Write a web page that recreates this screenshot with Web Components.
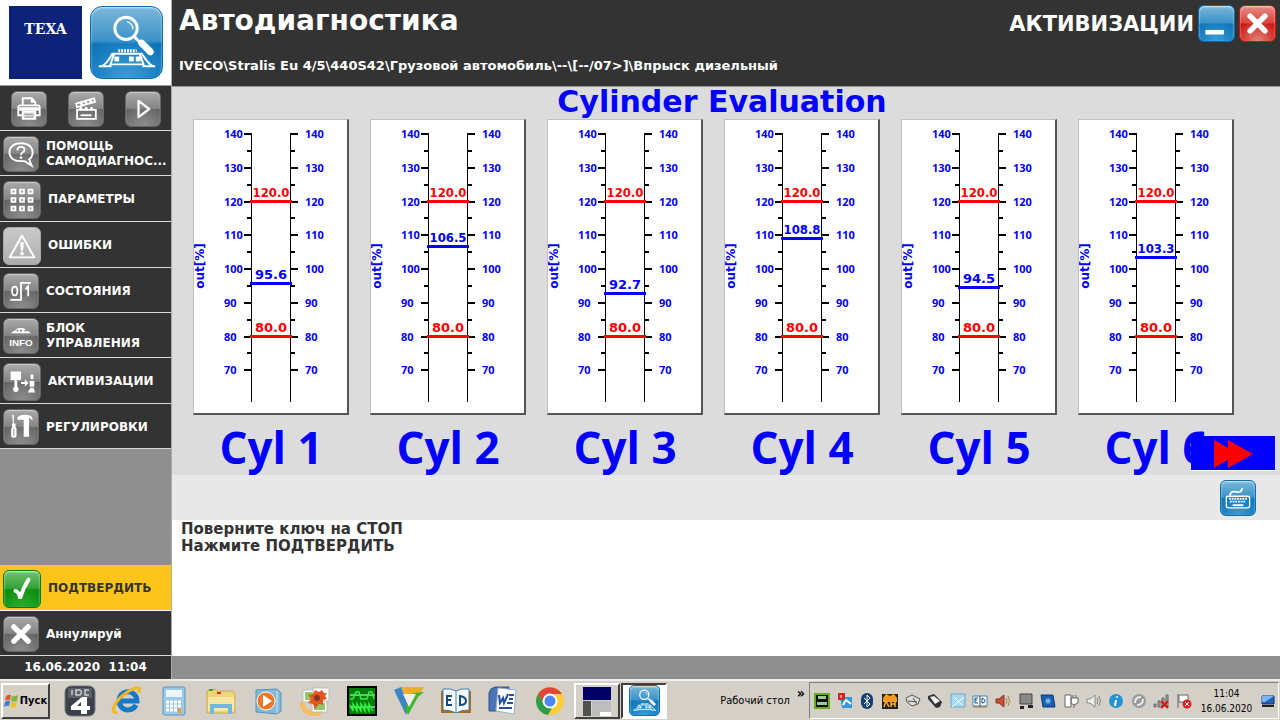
<!DOCTYPE html>
<html lang="ru">
<head>
<meta charset="utf-8">
<title>Автодиагностика</title>
<style>
  body {
    margin: 0;
    font-family: "DejaVu Sans", Verdana, sans-serif;
  }
</style>
</head>
<body>
<diag-app></diag-app>

<script>
const GLYPHS = {
  probe: `<g fill="none" stroke="#fff"><circle cx="36" cy="22" r="11.500" stroke-width="3"/><path d="M37 15a8 8 0 0 1 6 8" stroke-width="1.500"/><path d="M45 31l6 6" stroke-width="3"/><path d="M52 37l9 9" stroke-width="7" stroke-linecap="round"/><path d="M8 61h12v-2h34v2h12M11 61c6-3 8-8 11-13h30c4 5 6 10 12 13M20 59l4-11M54 59l-4-11" stroke-width="2"/><path d="M28 45h19" stroke-width="3" stroke-dasharray="2 1"/></g><path fill="#fff" d="M24 51h5v5h-5zM39 51h5v5h-5zM46 51h5v5h-5z"/>`,
  printer: `<g fill="none" stroke="#fff" stroke-width="2"><path d="M12 15V7h10l4 4v4M22 7v4h4M12 26H7V17q0-2 2-2h20q2 0 2 2v9h-5"/><path d="M12 22h14v8H12z" fill="#ddd"/></g><path stroke="#888" d="M14 25h10M14 28h10"/><path fill="#fff" d="M8 17h22v4H8z"/>`,
  clapper: `<g fill="none" stroke="#fff" stroke-width="2"><path d="M9 20h21v10H9zM8 13l20-6 1 4-20 6z"/><path d="M13 26h12"/><path d="M13 11l2 4M18 10l2 4M23 8l2 4M14 17l-2 3M20 17l-2 3M26 17l-2 3" stroke-width="3"/></g>`,
  play: `<path d="M14 10l12 9-12 9z" fill="none" stroke="#fff" stroke-width="2.500" stroke-linejoin="round"/>`,
  help: `<path d="M19 7C11 7 6 11 6 17s5 10 12 10h5l8 5-3-7c3-2 4-5 4-8 0-6-5-10-13-10z" fill="none" stroke="#fff" stroke-width="2"/><path d="M15 15q0-4 4-4t4 3q0 2-2 3t-2 3" fill="none" stroke="#fff" stroke-width="2"/><circle cx="19" cy="23" r="1.500" fill="#fff"/>`,
  grid: `<g fill="#999" stroke="#fff" stroke-width="2"><path d="M8 8h4v4H8zM17 8h4v4h-4zM26 8h4v4h-4zM8 17h4v4H8zM17 17h4v4h-4zM26 17h4v4h-4zM8 26h4v4H8zM17 26h4v4h-4zM26 26h4v4h-4z"/></g>`,
  warn: `<path d="M19 8l13 23H6z" fill="none" stroke="#fff" stroke-width="2" stroke-linejoin="round"/><path d="M17 15h4l-1 9h-2z" fill="#fff"/><circle cx="19" cy="27" r="2" fill="#fff"/>`,
  states: `<ellipse cx="12" cy="19" rx="3" ry="5" fill="none" stroke="#fff" stroke-width="2"/><path d="M7 29h12V10h11M24 17l3-3v11" fill="none" stroke="#fff" stroke-width="2"/>`,
  info: `<path d="M8 16h22q-1-2-5-3-2-3-4-3h-4q-3 0-5 3-3 1-4 3z" fill="#fff"/><path d="M14 13h2M18 13h2M23 13h2" stroke="#888" stroke-width="2"/><text x="19" y="30" text-anchor="middle" font-size="11" font-weight="bold" font-family="Liberation Sans, sans-serif" fill="#fff">INFO</text>`,
  activate: `<path fill="#fff" d="M7 8h11v9h-4v7a3 3 0 1 1-3 0v-7H7zM18 19h4v-3l4 4-4 4v-3h-4zM28 11h3v5h-3zM27 18h5v6h-5zM28 25h3l2 5h-8z"/>`,
  tools: `<path fill="#fff" d="M9 5l2 1v9h2v5h1v9q0 2-3 2t-3-2v-9h1v-5h1zM15 8q5-4 13-2 4 1 4 6l-3-3h-1v21h-6V11h-7z"/><path stroke="#888" d="M11 21v8"/>`,
  check: `<path d="M12 21q4 1 5 8 3-11 9-20" fill="none" stroke="#fff" stroke-width="4" stroke-linecap="round"/>`,
  cross: `<path d="M11 11l16 16M27 11L11 27" stroke="#fff" stroke-width="6" stroke-linecap="round"/>`,
  minimize: `<path fill="#fff" d="M7 26h20v5H7z"/>`,
  keyboard: `<g fill="none" stroke="#fff"><rect x="6" y="17" width="26" height="13" rx="2" stroke-width="1.500"/><path d="M10 16q1-5 5-4t7 0l2-4" stroke-width="2"/><path d="M9 20h20M10 23h18" stroke-width="2" stroke-dasharray="2 1"/><path d="M13 27h12" stroke-width="2"/></g>`
};

const SIZES = { probe: 73 };

/* Glossy rounded square that carries most of the pictograms. */
class IconTile extends HTMLElement {
  constructor() {
    super();
    this.attachShadow({ mode: 'open' });
  }

  connectedCallback() {
    const name = this.getAttribute('name');
    const box = SIZES[name] || 38;
    this.shadowRoot.innerHTML = `
      <style>
        :host {
          display: block;
          flex: none;
          box-sizing: border-box;
          width: var(--tile, 36px);
          height: var(--tile, 36px);
          border-radius: var(--tile-radius, 6px);
          border: 1px solid #666;
          background: radial-gradient(circle at 50% 100%, #8d8d8d, transparent 60%), linear-gradient(#a9a9a9, #858585 48%, #626262 52%, #6c6c6c);
          box-shadow: inset 0 1px 1px #ccc;
        }
        :host([tone="blue"]) {
          border-color: #0b6dac;
          background: radial-gradient(circle at 50% 100%, #3c9bd8, transparent 60%), linear-gradient(#7ab7da, #3a92c7 48%, #0b72b5 52%, #0b76b9);
          box-shadow: inset 0 1px 2px #d5ecf8;
        }
        :host([tone="red"]) {
          border-color: #c4160f;
          background: radial-gradient(circle at 50% 100%, #e08078, transparent 60%), linear-gradient(#e78d88, #d9433c 48%, #cb110b 52%, #cf1c14);
          box-shadow: inset 0 1px 2px #f7cfcc;
        }
        :host([tone="green"]) {
          border-color: #0b7a10;
          background: radial-gradient(circle at 50% 100%, #2cab2e, transparent 60%), linear-gradient(#6fc26e, #34a136 48%, #078a0c 52%, #0a930f);
          box-shadow: inset 0 1px 2px #d0f0d0;
        }
        :host([tone="pale"]) {
          border-color: #aaa;
          background: linear-gradient(#c8c8c8, #bcbcbc 50%, #acacac);
        }
        svg { display: block; width: 100%; height: 100%; }
      </style>
      <svg viewBox="0 0 ${box} ${box}" aria-hidden="true">${GLYPHS[name]}</svg>
    `;
  }
}
customElements.define('icon-tile', IconTile);

class SideButton extends HTMLElement {
  constructor() {
    super();
    this.attachShadow({ mode: 'open' });
  }

  connectedCallback() {
    this.shadowRoot.innerHTML = `
      <style>
        :host { display: block; }
        button {
          display: flex;
          align-items: center;
          gap: 7px;
          box-sizing: border-box;
          width: 100%;
          height: 45px;
          padding: 2px 0 0 3px;
          border: 0;
          border-bottom: 1px solid #d8d8d8;
          background: #333;
          color: #fff;
          font: bold 12px/15px "DejaVu Sans", Verdana, sans-serif;
          text-align: left;
          white-space: nowrap;
        }
        :host([large]) button { height: 46px; --tile: 38px; }
        :host([primary]) button {
          background: #fdc51b;
          color: #333;
          border-bottom: 1px solid #fff;
        }
      </style>
      <button type="button">
        <icon-tile name="${this.getAttribute('icon')}" tone="${this.getAttribute('tone') || 'grey'}"></icon-tile>
        <span><slot></slot></span>
      </button>
    `;
  }
}
customElements.define('side-button', SideButton);

class SideBar extends HTMLElement {
  constructor() {
    super();
    this.attachShadow({ mode: 'open' });
    this.shadowRoot.innerHTML = `
      <style>
        :host {
          display: flex;
          flex-direction: column;
          box-sizing: border-box;
          width: 172px;
          flex: none;
          border-right: 1px solid #aaa;
          background: #8f8f8f;
        }
        .logos {
          display: flex;
          justify-content: space-between;
          box-sizing: border-box;
          height: 86px;
          padding: 6px 8px 0 9px;
          background: #fff;
          border-bottom: 1px solid #999;
          --tile: 73px;
          --tile-radius: 12px;
        }
        .brand {
          width: 73px;
          height: 73px;
          background: #0d2379;
          color: #fff;
          font: bold 14px/46px "DejaVu Serif", serif;
          text-align: center;
        }
        .tools {
          display: flex;
          justify-content: space-between;
          align-items: center;
          box-sizing: border-box;
          height: 45px;
          padding: 2px 10px 0 11px;
          background: #333;
          border-bottom: 1px solid #d8d8d8;
        }
        .tools button { padding: 0; border: 0; background: none; }
        .space { flex: 1; }
        time {
          background: #333;
          color: #fff;
          font: bold 12px/23px "DejaVu Sans", Verdana, sans-serif;
          text-align: center;
          white-space: pre;
        }
      </style>
      <div class="logos">
        <div class="brand">TEXA</div>
        <icon-tile name="probe" tone="blue"></icon-tile>
      </div>
      <div class="tools">
        <button type="button" aria-label="Печать"><icon-tile name="printer"></icon-tile></button>
        <button type="button" aria-label="Запись"><icon-tile name="clapper"></icon-tile></button>
        <button type="button" aria-label="Пуск"><icon-tile name="play"></icon-tile></button>
      </div>
      <side-button icon="help">ПОМОЩЬ<br>САМОДИАГНОС...</side-button>
      <side-button icon="grid" large>ПАРАМЕТРЫ</side-button>
      <side-button icon="warn" tone="pale" large>ОШИБКИ</side-button>
      <side-button icon="states">СОСТОЯНИЯ</side-button>
      <side-button icon="info">БЛОК<br>УПРАВЛЕНИЯ</side-button>
      <side-button icon="activate" large>АКТИВИЗАЦИИ</side-button>
      <side-button icon="tools">РЕГУЛИРОВКИ</side-button>
      <div class="space"></div>
      <side-button icon="check" tone="green" large primary>ПОДТВЕРДИТЬ</side-button>
      <side-button icon="cross">Аннулируй</side-button>
      <time datetime="2020-06-16T11:04">16.06.2020  11:04</time>
    `;
  }
}
customElements.define('side-bar', SideBar);

class PageHeader extends HTMLElement {
  constructor() {
    super();
    this.attachShadow({ mode: 'open' });
    this.shadowRoot.innerHTML = `
      <style>
        :host {
          display: flex;
          justify-content: space-between;
          align-items: flex-start;
          box-sizing: border-box;
          height: 87px;
          padding: 5px 4px 0 7px;
          background: #333;
          border-bottom: 1px solid #999;
          color: #fff;
          font-weight: bold;
        }
        h1 { margin: 0; font-size: 28px; line-height: 32px; }
        p { margin: 20px 0 0; font-size: 13px; line-height: 18px; }
        .right { display: flex; align-items: center; gap: 4px; }
        h2 { margin: 0; font-size: 21px; line-height: 36px; }
        button { padding: 0; border: 0; background: none; --tile: 37px; }
      </style>
      <div>
        <h1>Автодиагностика</h1>
        <p>IVECO\\Stralis Eu 4/5\\440S42\\Грузовой автомобиль\\--\\[--/07&gt;]\\Впрыск дизельный</p>
      </div>
      <div class="right">
        <h2>АКТИВИЗАЦИИ</h2>
        <button type="button" aria-label="Свернуть"><icon-tile name="minimize" tone="blue"></icon-tile></button>
        <button type="button" aria-label="Закрыть"><icon-tile name="cross" tone="red"></icon-tile></button>
      </div>
    `;
  }
}
customElements.define('page-header', PageHeader);

class CylinderGauge extends HTMLElement {
  constructor() {
    super();
    this.attachShadow({ mode: 'open' });
  }

  // value in percent to a row of the drawing
  y(value) {
    return Math.round(13 + (140 - value) * 3.375);
  }

  scale() {
    let out = '';
    for (let v = 140; v >= 70; v -= 5) {
      const y = this.y(v);
      if (v % 10) {
        out += `<path d="M53 ${y}h4v2h-4zM97 ${y}h4v2h-4z"/>`;
      } else {
        out += `<path d="M50 ${y}h7v2h-7zM97 ${y}h7v2h-7z"/>
          <text class="num" x="30" y="${y + 5}">${v}</text>
          <text class="num" x="111" y="${y + 5}">${v}</text>`;
      }
    }
    return out;
  }

  mark(value, color) {
    const y = this.y(value);
    const text = value.toFixed(1);
    return `<rect x="56" y="${y - 1}" width="42" height="3" fill="${color}"/>
      <text class="mark ${text.length > 4 ? 'long' : ''}" x="77" y="${y - 4}" fill="${color}">${text}</text>`;
  }

  connectedCallback() {
    this.shadowRoot.innerHTML = `
      <style>
        :host { display: block; }
        figure { margin: 0; }
        svg {
          display: block;
          box-sizing: border-box;
          width: 100%;
          border: 1px solid #c4c1ba;
          border-right: 2px solid #555;
          border-bottom: 2px solid #555;
          background: #fff;
        }
        .num { font: bold 11px "Open Sans", sans-serif; fill: #00f; }
        .mark { font: bold 13px "DejaVu Sans", sans-serif; text-anchor: middle; }
        .long { font-family: "DejaVu Sans Condensed", "DejaVu Sans", sans-serif; }
        .unit { font: bold 12px "DejaVu Sans", sans-serif; fill: #00f; text-anchor: middle; }
        figcaption {
          color: #00f;
          font: bold 44px/64px "Open Sans", sans-serif;
          text-align: center;
          white-space: nowrap;
          height: 60px;
        }
      </style>
      <figure>
        <svg viewBox="0 0 153 293">
          <path d="M57 13h1v269h-1zM96 13h1v269h-1z"/>
          ${this.scale()}
          <text class="unit" transform="translate(10 146) rotate(-90)">out[%]</text>
          ${this.mark(120, '#f00')}
          ${this.mark(80, '#f00')}
          ${this.mark(Number(this.getAttribute('value')), '#00f')}
        </svg>
        <figcaption><slot></slot></figcaption>
      </figure>
    `;
  }
}
customElements.define('cylinder-gauge', CylinderGauge);

class CylinderPanel extends HTMLElement {
  constructor() {
    super();
    this.attachShadow({ mode: 'open' });
    this.shadowRoot.innerHTML = `
      <style>
        :host {
          display: block;
          position: relative;
          background: #dcdcdc;
        }
        h3 {
          margin: 0;
          padding: 0 8px 2px 0;
          color: #00f;
          font-size: 30px;
          line-height: 30px;
          text-align: center;
        }
        .gauges {
          display: grid;
          grid-template-columns: repeat(6, 1fr);
          gap: 21px;
          padding: 0 46px 0 21px;
        }
        button {
          position: absolute;
          right: 5px;
          bottom: 4px;
          width: 84px;
          height: 35px;
          padding: 0;
          border: 0;
          border-bottom: 1px solid #fff;
          background: #00f;
        }
        button svg { display: block; }
      </style>
      <h3>Cylinder Evaluation</h3>
      <div class="gauges">
        <cylinder-gauge value="95.6">Cyl 1</cylinder-gauge>
        <cylinder-gauge value="106.5">Cyl 2</cylinder-gauge>
        <cylinder-gauge value="92.7">Cyl 3</cylinder-gauge>
        <cylinder-gauge value="108.8">Cyl 4</cylinder-gauge>
        <cylinder-gauge value="94.5">Cyl 5</cylinder-gauge>
        <cylinder-gauge value="103.3">Cyl 6</cylinder-gauge>
      </div>
      <button type="button" aria-label="Далее">
        <svg width="84" height="34"><path fill="#f00" d="M23 4l14 8V4l25 14-25 14v-8L23 32z"/></svg>
      </button>
    `;
  }
}
customElements.define('cylinder-panel', CylinderPanel);

const APPS = {
  'IDC4': `<rect x="1" y="1" width="30" height="30" rx="6" fill="#3c4048" stroke="#777b82"/><path fill="#5b6068" d="M4 3h24v10H4z"/><path d="M8 5v5M12 5v5h4q3-3 0-5zM25 5h-4v5h4" fill="none" stroke="#ccc" stroke-width="1.500"/><path fill="#fff" d="M18 12h5v9h3v4h-3v4h-6v-4H7v-4zM17 17l-4 4h4z"/>`,
  'Internet Explorer': `<path d="M25 20a9 9 0 1 1 1-4H10" fill="none" stroke="#1579c8" stroke-width="5"/><path d="M6 27C-2 30 3 16 15 8S31 2 27 8" fill="none" stroke="#f3b81d" stroke-width="3"/>`,
  'Калькулятор': `<rect x="5" y="2" width="22" height="28" rx="2" fill="#9cc9e8" stroke="#5f94bb"/><path fill="#eef6fc" d="M8 5h16v7H8z"/><path fill="none" stroke="#fff" stroke-width="3" stroke-dasharray="3 1" d="M8 17h15M8 21h15M8 25h11"/><path fill="#ef9432" d="M20 23h3v5h-3z"/>`,
  'Проводник': `<path fill="#f0d578" stroke="#cda94b" d="M2 6l8-2 2 2h16l2 4v18H2z"/><path fill="#f8e7a3" d="M3 12h26v14H3z"/><path stroke="#4a9c39" stroke-width="2" d="M4 5h4"/><path stroke="#c33" stroke-width="2" d="M12 8h4"/><path d="M7 29v-8h18v8" fill="none" stroke="#74b7dc" stroke-width="4"/>`,
  'Проигрыватель': `<path fill="#84b8d8" stroke="#5a93b8" d="M4 5l21-1 4 4v18l-4 3-21-2z"/><path stroke="#d3e8f4" d="M25 6v22"/><circle cx="14" cy="16" r="9" fill="#ef7625" stroke="#fff"/><path fill="#fff" d="M11 10l9 6-9 6z"/>`,
  'Фото': `<path d="M3 17q1 14 19 11" fill="none" stroke="#f4bd64" stroke-width="5"/><path fill="#fff" stroke="#bbb" d="M4 5h13v12H4zM13 16h15v11H13z"/><path fill="#8fca6a" d="M6 7h9v8H6zM15 18h11v7H15z"/><path fill="#fff" stroke="#bbb" d="M14 3h16v13H14z"/><path fill="#e2571e" d="M16 5l4 2 3-2 2 3h3l-2 3 2 3-4 1v5l-4-1-4 5-2-5-5-1 3-4-3-4 5-1z"/><circle cx="18" cy="13" r="3" fill="#832"/>`,
  'Осциллограф': `<path fill="#067a0c" stroke="#000" stroke-width="2" d="M2 2h28v28H2z"/><path stroke="#dff" d="M4 10h25M4 22h25"/><path d="M4 14h3l3-7h3l2 7h6l2-7h3l2 7M4 20l3 6V19l4 7v-7l4 7v-7l4 7v-7l4 7v-7l4 7" fill="none" stroke="#2cf53c" stroke-width="1.500"/>`,
  'Autodata': `<path fill="#f1ad25" d="M8 2h23l-5 8H12z"/><path fill="#3e84c4" d="M1 5l7-3 8 20-3 8z"/><path fill="#43b52c" d="M31 7l-6 5-10 18-3-7L20 8z"/><path fill="#eee" d="M10 9h13l-7 13z"/>`,
  'ED': `<path fill="#b06b18" d="M1 6h30v22H1z"/><path fill="#f7fbff" stroke="#3c80b0" d="M3 4q8-1 13 2 5-3 13-2v21q-8 0-13 3-5-3-13-3z"/><path stroke="#3c80b0" d="M16 6v21"/><path d="M12 11H7v9h5M7 15h4M20 11v9q6 0 6-4t-6-5z" fill="none" stroke="#174a7c" stroke-width="2"/>`,
  'Word': `<path fill="#4c75b7" stroke="#2c5490" d="M2 8q1-5 6-6h14v24H2z"/><path fill="#fff" stroke="#9aaed0" d="M11 3l18 2-2 24-18-3z"/><path d="M12 10l1 8 3-5 1 5 4-9" fill="none" stroke="#234f9c" stroke-width="2"/><path stroke="#234f9c" stroke-width="2" d="M22 10h5M22 14h4M20 18h6M12 23h13"/>`,
  'Chrome': `<circle cx="16" cy="16" r="14" fill="#fccd3c"/><path fill="#e0453a" d="M4 9a14 14 0 0 1 24 0H16l-6 10z"/><path fill="#2c9e4b" d="M4 9l6 10 8 4-4 7A14 14 0 0 1 4 9z"/><circle cx="16" cy="16" r="6.500" fill="#4a87ee" stroke="#fff" stroke-width="2"/>`
};

const TRAY = [
  `<path fill="#111" stroke="#6a2" stroke-width="2" d="M1 1h14v14H1z"/><path fill="#9c9" d="M4 3h8v3H4zM3 9h10v3H3z"/>`,
  `<path fill="#3498dc" d="M3 4h12v11H5z"/><path d="M6 12l3-5 5 4" fill="none" stroke="#fff" stroke-width="2"/><path fill="#d22" d="M1 0h7v7H1z"/><path stroke="#fff" d="M4 2v3"/>`,
  `<rect x="2" width="12" height="16" rx="6" fill="#123f78"/><path d="M5 5l6 6-3 3V2l3 3-6 6" fill="none" stroke="#fff"/>`,
  `<path fill="#222" d="M0 1h16v15H0z"/><path fill="#f39a1d" d="M1 5l3-4 4 2 4-2 3 4v4H1z"/><path d="M2 14l2-6 3 6M9 8v6M13 8v6M9 11h4" fill="none" stroke="#fa3" stroke-width="1.500"/>`,
  `<path fill="#ddd" stroke="#555" d="M1 5l6-3 8 4-2 5-6 2-5-4zM3 8l9 1M8 5l4 6"/>`,
  `<path fill="#333" d="M1 3l6-2 8 8-2 5-4 1-8-9z"/><path fill="#eee" d="M3 4l4-1 6 5-5 3z"/>`,
  `<path fill="#a5daf1" stroke="#68a9ca" d="M1 1h14v13H1z"/><path d="M4 4l8 8M2 14L14 4" stroke="#fff"/>`,
  `<path fill="#fff" stroke="#3c80b0" d="M1 3h14v10H1z"/><path stroke="#a06a1a" d="M1 14h14"/><path d="M6 5H3v5h3M3 7h2M10 5v5q3 0 3-2t-3-3M8 3v10" fill="none" stroke="#174a7c"/>`,
  `<path fill="#c8512f" stroke="#833" d="M1 6h3l5-4v12l-5-4H1z"/><path d="M11 5q2 3 0 6M13 3q3 5 0 10" fill="none" stroke="#a84"/>`,
  `<path fill="#888" stroke="#444" d="M2 1h12v10H2z"/><path fill="#222" d="M2 13h4v3H2zM10 12h5v3h-5z"/>`,
  `<path fill="#1b5fae" stroke="#0a397c" d="M1 2h12l2 12H3z"/><path d="M5 8h6M8 5v6M6 6l4 4M10 6l-4 4" stroke="#8cf"/>`,
  `<path fill="#fff" stroke="#666" d="M2 2h6v12H2zM8 5h7v5l-4 2-3-2z"/><path stroke="#666" d="M10 2v3M13 2v3M11 12v3"/>`,
  `<path fill="#eee" stroke="#888" d="M1 6h3l5-4v12l-5-4H1z"/><path d="M11 5q2 3 0 6M13 3q3 5 0 10" fill="none" stroke="#888"/>`,
  `<circle cx="8" cy="8" r="7" fill="#2392d8"/><circle cx="9" cy="4" r="1" fill="#fff"/><path d="M8 7l-1 6" stroke="#fff" stroke-width="2"/>`,
  `<circle cx="8" cy="8" r="7" fill="#999"/><path d="M4 10q0-6 6-6M12 6q0 6-6 6" fill="none" stroke="#eee" stroke-width="2"/>`,
  `<path fill="#aaa" stroke="#666" d="M1 11h2v3H1zM5 8h2v6H5zM9 5h2v9H9zM13 2h2v12h-2z"/><path d="M8 8l7 7M15 8l-7 7" stroke="#d11" stroke-width="2"/>`,
  `<path fill="#fff" stroke="#666" d="M2 1v14M3 2h9v7H3z"/><circle cx="11" cy="11" r="4.500" fill="#d22"/><path d="M9 9l4 4M13 9l-4 4" stroke="#fff"/>`
];

class TaskBar extends HTMLElement {
  constructor() {
    super();
    this.attachShadow({ mode: 'open' });
    const apps = Object.keys(APPS).map(name =>
      `<button class="app" type="button" aria-label="${name}"><svg width="32" height="32">${APPS[name]}</svg></button>`).join('');
    const tray = TRAY.map(svg => `<svg width="16" height="16">${svg}</svg>`).join('');
    this.shadowRoot.innerHTML = `
      <style>
        :host {
          display: flex;
          align-items: center;
          box-sizing: border-box;
          height: 41px;
          padding: 0 1px;
          border-top: 2px solid #efede8;
          background: #d4d0c8;
          color: #000;
          font: 11px/15px "DejaVu Sans Condensed", "DejaVu Sans", sans-serif;
        }
        svg { display: block; flex: none; }
        button { padding: 0; border: 0; background: none; font: inherit; }
        .start, .window {
          box-sizing: border-box;
          height: 36px;
          border: 2px solid;
          border-color: #fff #404040 #404040 #fff;
          display: flex;
          align-items: center;
          justify-content: center;
        }
        .start { width: 49px; gap: 1px; font-weight: bold; margin-right: 6px; }
        .app { width: 47px; display: flex; justify-content: center; }
        .window { width: 46px; margin-left: 1px; }
        .active { border-color: #404040 #fff #fff #404040; background: #fff; --tile: 31px; --tile-radius: 5px; }
        .desk { margin-left: auto; display: flex; gap: 7px; padding-right: 4px; }
        .desk b { font-size: 14px; line-height: 1px; }
        .tray {
          box-sizing: border-box;
          width: 470px;
          height: 37px;
          display: flex;
          align-items: center;
          justify-content: space-between;
          padding: 0 3px 0 4px;
          border: 1px solid;
          border-color: #808080 #fff #fff #808080;
        }
        .icons { display: flex; gap: 6px; width: 378px; justify-content: space-between; }
        time { text-align: center; font-size: 10px; }
      </style>
      <button class="start" type="button">
        <svg width="15" height="16"><path fill="#e8542c" d="M2 3q3-2 5-1L6 7Q4 6 1 8z"/><path fill="#7cb83c" d="M8 3q3 1 6-1l-1 6q-3 1-6 0z"/><path fill="#3c7cd8" d="M1 9q3-2 5-1l-1 5q-2-1-5 1z"/><path fill="#f5bd28" d="M7 9q3 1 6 0l-1 5q-3 1-6 0z"/></svg>Пуск
      </button>
      ${apps}
      <button class="window" type="button" aria-label="Окна">
        <svg width="30" height="30"><path fill="#000063" d="M1 1h28v13H1z"/><path fill="#505050" d="M1 15h8v15H1z"/><path fill="#bdbdbd" d="M10 15h19v15H10z"/><path fill="#fff" d="M18 26h11v4H18z"/></svg>
      </button>
      <button class="window active" type="button" aria-label="TEXA"><icon-tile name="probe" tone="blue"></icon-tile></button>
      <div class="desk"><span>Рабочий стол</span><b>»</b></div>
      <div class="tray">
        <div class="icons">${tray}</div>
        <time datetime="2020-06-16T11:04">11:04<br>16.06.2020</time>
        <svg width="14" height="14"><path fill="#235fb8" stroke="#12356e" d="M1 2h12v8H1z"/><path fill="#79b5f0" d="M1 2h12L4 8H1z"/><path stroke="#222" stroke-width="2" d="M1 12h12"/></svg>
      </div>
    `;
  }
}
customElements.define('task-bar', TaskBar);

class DiagApp extends HTMLElement {
  constructor() {
    super();
    this.attachShadow({ mode: 'open' });
    this.shadowRoot.innerHTML = `
      <style>
        :host { display: flex; flex-direction: column; min-height: 100vh; }
        .work { display: flex; flex: 1; }
        main { flex: 1; min-width: 0; display: flex; flex-direction: column; }
        .keys {
          display: flex;
          justify-content: flex-end;
          align-items: center;
          height: 45px;
          padding-right: 24px;
          background: #e8e8e8;
        }
        .keys button { padding: 0; border: 0; background: none; }
        .message {
          flex: 1;
          padding: 1px 9px 0;
          background: #fff;
          color: #333;
          font-size: 15px;
          font-weight: bold;
          line-height: 17px;
        }
        .message p { margin: 0; }
        .status { height: 23px; background: #8f8f8f; }
      </style>
      <div class="work">
        <side-bar></side-bar>
        <main>
          <page-header></page-header>
          <cylinder-panel></cylinder-panel>
          <div class="keys">
            <button type="button" aria-label="Клавиатура"><icon-tile name="keyboard" tone="blue"></icon-tile></button>
          </div>
          <div class="message">
            <p>Поверните ключ на СТОП</p>
            <p>Нажмите ПОДТВЕРДИТЬ</p>
          </div>
          <div class="status"></div>
        </main>
      </div>
      <task-bar></task-bar>
    `;
  }
}
customElements.define('diag-app', DiagApp);
</script>
</body>
</html>
